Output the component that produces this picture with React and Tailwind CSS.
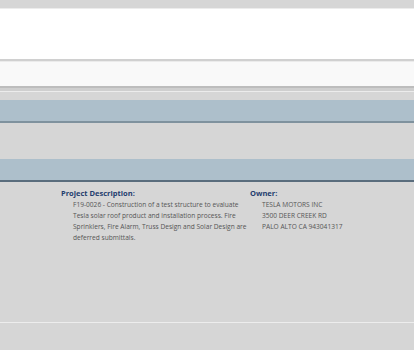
export default function App() {
  return (
    <div className="w-[414px] h-[350px] bg-[#d6d6d6] overflow-hidden flex flex-col" style={{ fontFamily: '"Open Sans", "Liberation Sans", sans-serif' }}>
      <div className="h-[8px] shrink-0" />
      <div className="h-[51px] shrink-0 bg-white border-t border-[#ececec]" />
      <div className="h-[2px] shrink-0 bg-[#d0d0d0]" />
      <div className="h-[25px] shrink-0 bg-[#f9f9f9] border-t border-[#ebebeb]" />
      <div className="h-[2px] shrink-0 bg-[#bdbdbd]" />
      <div className="h-[3px] shrink-0 bg-[#cfcfcf]" />
      <div className="h-[1px] shrink-0 bg-[#ececec]" />
      <div className="h-[8px] shrink-0" />
      <div className="h-[21px] shrink-0 bg-[#adbfcb]" />
      <div className="h-[2px] shrink-0 bg-[#7f929e]" />
      <div className="h-[36px] shrink-0" />
      <div className="h-[21px] shrink-0 bg-[#adbfcb]" />
      <div className="h-[2px] shrink-0 bg-[#5a6d7d]" />
      <div className="grid grid-cols-[189px_1fr] pl-[61px] pt-[6px]">
        <div>
          <div className="text-[7.5px] leading-[11px] font-bold text-[#1f3d6e]">Project Description:</div>
          <div className="pl-[12px] pr-[1px] text-[6.6px] leading-[11px] text-[#555]">
            F19-0026 - Construction of a test structure to evaluate Tesla solar roof product and installation process. Fire Sprinklers, Fire Alarm, Truss Design and Solar Design are deferred submittals.
          </div>
        </div>
        <div>
          <div className="text-[7.5px] leading-[11px] font-bold text-[#1f3d6e]">Owner:</div>
          <div className="pl-[12px] text-[6.6px] leading-[11px] text-[#555]">
            <div>TESLA MOTORS INC</div>
            <div>3500 DEER CREEK RD</div>
            <div>PALO ALTO CA 943041317</div>
          </div>
        </div>
      </div>
      <div className="mt-[79px] h-[1px] shrink-0 bg-[#ededed]" />
    </div>
  );
}
